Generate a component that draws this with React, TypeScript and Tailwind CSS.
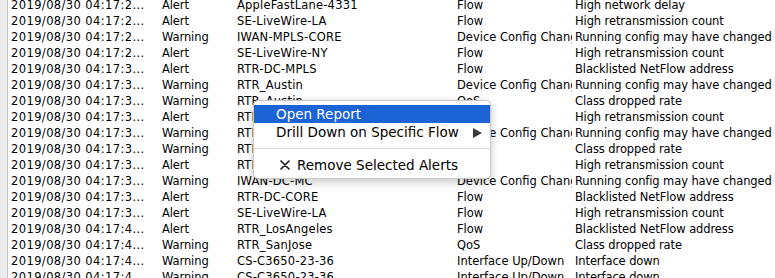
import React from "react";

type Row = {
  time: string;
  severity: string;
  device: string;
  category: string;
  message: string;
};

const ROWS: Row[] = [
  { time: "2019/08/30 04:17:2...", severity: "Alert", device: "AppleFastLane-4331", category: "Flow", message: "High network delay" },
  { time: "2019/08/30 04:17:2...", severity: "Alert", device: "SE-LiveWire-LA", category: "Flow", message: "High retransmission count" },
  { time: "2019/08/30 04:17:2...", severity: "Warning", device: "IWAN-MPLS-CORE", category: "Device Config Change", message: "Running config may have changed" },
  { time: "2019/08/30 04:17:2...", severity: "Alert", device: "SE-LiveWire-NY", category: "Flow", message: "High retransmission count" },
  { time: "2019/08/30 04:17:3...", severity: "Alert", device: "RTR-DC-MPLS", category: "Flow", message: "Blacklisted NetFlow address" },
  { time: "2019/08/30 04:17:3...", severity: "Warning", device: "RTR_Austin", category: "Device Config Change", message: "Running config may have changed" },
  { time: "2019/08/30 04:17:3...", severity: "Warning", device: "RTR_Austin", category: "QoS", message: "Class dropped rate" },
  { time: "2019/08/30 04:17:3...", severity: "Alert", device: "RTR_Austin", category: "Flow", message: "High retransmission count" },
  { time: "2019/08/30 04:17:3...", severity: "Warning", device: "RTR_Dallas", category: "Device Config Change", message: "Running config may have changed" },
  { time: "2019/08/30 04:17:3...", severity: "Warning", device: "RTR_Dallas", category: "QoS", message: "Class dropped rate" },
  { time: "2019/08/30 04:17:3...", severity: "Alert", device: "RTR_Dallas", category: "Flow", message: "High retransmission count" },
  { time: "2019/08/30 04:17:3...", severity: "Warning", device: "IWAN-DC-MC", category: "Device Config Change", message: "Running config may have changed" },
  { time: "2019/08/30 04:17:3...", severity: "Alert", device: "RTR-DC-CORE", category: "Flow", message: "Blacklisted NetFlow address" },
  { time: "2019/08/30 04:17:3...", severity: "Alert", device: "SE-LiveWire-LA", category: "Flow", message: "High retransmission count" },
  { time: "2019/08/30 04:17:4...", severity: "Alert", device: "RTR_LosAngeles", category: "Flow", message: "Blacklisted NetFlow address" },
  { time: "2019/08/30 04:17:4...", severity: "Warning", device: "RTR_SanJose", category: "QoS", message: "Class dropped rate" },
  { time: "2019/08/30 04:17:4...", severity: "Warning", device: "CS-C3650-23-36", category: "Interface Up/Down", message: "Interface down" },
  { time: "2019/08/30 04:17:4...", severity: "Warning", device: "CS-C3650-23-36", category: "Interface Up/Down", message: "Interface down" },
];

function ContextMenu() {
  return (
    <div className="absolute left-[253px] top-[100px] w-[238px] rounded-[5px] border border-[#c9c9c9] bg-white pt-[4px] pb-[3px] shadow-[0_3px_10px_rgba(0,0,0,0.22)] text-[13.5px] text-black">
      <div className="h-[18px] leading-[18px] bg-[#1c63d6] text-white pl-[22px]">Open Report</div>
      <div className="h-[19px] leading-[19px] pl-[22px] flex items-center">
        <span>Drill Down on Specific Flow</span>
        <svg className="ml-auto mr-[8px]" width="9" height="10" viewBox="0 0 9 10">
          <path d="M0 0 L9 5 L0 10 Z" fill="#3c3c3c" />
        </svg>
      </div>
      <div className="py-[6px]">
        <div className="h-px bg-[#dadada]" />
      </div>
      <div className="h-[20px] leading-[20px] pl-[26px] flex items-center gap-[7px]">
        <svg width="10" height="10" viewBox="0 0 10 10">
          <path d="M1 1 L9 9 M9 1 L1 9" stroke="#1a1a1a" strokeWidth="1.6" strokeLinecap="round" />
        </svg>
        <span>Remove Selected Alerts</span>
      </div>
    </div>
  );
}

export default function App() {
  return (
    <div
      className="relative w-[775px] h-[278px] overflow-hidden bg-white flex text-black"
      style={{ fontFamily: '"DejaVu Sans", "Lucida Grande", sans-serif' }}
    >
      <div className="w-[8px] shrink-0 bg-[#ececec] border-r border-[#c6c6c6]" />
      <div className="flex-1 -mt-[3px] text-[11.5px]">
        {ROWS.map((r, i) => (
          <div key={i} className="grid grid-cols-[151px_75px_220px_118px_1fr] h-[16px] leading-[16px] whitespace-nowrap">
            <div className="pl-[3px] overflow-hidden tracking-[0.4px]">{r.time}</div>
            <div className="pl-[3px] overflow-hidden tracking-[-0.1px]">{r.severity}</div>
            <div className="pl-[3px] overflow-hidden tracking-[0.2px]">{r.device}</div>
            <div className="pl-[3px] overflow-hidden">{r.category}</div>
            <div className="pl-[3px] overflow-hidden tracking-[-0.1px]">{r.message}</div>
          </div>
        ))}
      </div>
      <ContextMenu />
    </div>
  );
}
